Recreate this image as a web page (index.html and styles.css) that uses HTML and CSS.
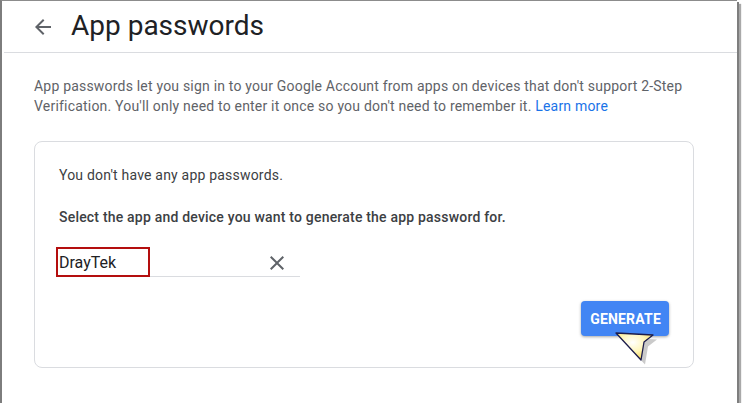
FILE: index.html
```html
<!DOCTYPE html>
<html lang="en">
<head>
<meta charset="utf-8">
<title>App passwords</title>
<link rel="stylesheet" href="styles.css">
</head>
<body>
<div class="frame">
  <header class="top">
    <button class="back" aria-label="Back">
      <svg viewBox="0 0 24 24" width="24" height="24"><path d="M20 11H7.83l5.59-5.59L12 4l-8 8 8 8 1.41-1.41L7.83 13H20v-2z" fill="#5f6368"/></svg>
    </button>
    <h1 class="title">App passwords</h1>
  </header>
  <main class="content">
    <p class="intro">App passwords let you sign in to your Google Account from apps on devices that don't support 2-Step Verification. You'll only need to enter it once so you don't need to remember it. <a href="#" class="link">Learn more</a></p>
    <section class="card">
      <p class="none">You don't have any app passwords.</p>
      <p class="select">Select the app and device you want to generate the app password for.</p>
      <div class="field">
        <span class="value">DrayTek</span>
        <svg class="clear" viewBox="0 0 24 24" width="24" height="24"><path d="M19 6.41L17.59 5 12 10.59 6.41 5 5 6.41 10.59 12 5 17.59 6.41 19 12 13.41 17.59 19 19 17.59 13.41 12z" fill="#5f6368"/></svg>
        <span class="mark"></span>
      </div>
      <div class="actions">
        <button class="gen">GENERATE</button>
        <svg class="cursor" viewBox="0 0 44 34" width="44" height="34">
          <defs>
            <radialGradient id="g" cx="0.45" cy="0.35" r="0.7">
              <stop offset="0" stop-color="#ffffff"/>
              <stop offset="0.5" stop-color="#fff6b8"/>
              <stop offset="1" stop-color="#f2d04a"/>
            </radialGradient>
          </defs>
          <path d="M4 5 L41 7 L32 14 L29 32 Z" fill="#8a8a8a" opacity="0.45" transform="translate(2,1.5)"/>
          <path d="M2 2 L39 4 L30 11 L27 29 Z" fill="url(#g)" stroke="#1c1c4c" stroke-width="1.3" stroke-linejoin="round"/>
        </svg>
      </div>
    </section>
  </main>
</div>
</body>
</html>
```
FILE: styles.css
```css
html, body {
  margin: 0;
  padding: 0;
  background: #ffffff;
}
body {
  font-family: Roboto, "Liberation Sans", Arial, sans-serif;
  color: #3c4043;
}
.frame {
  box-sizing: border-box;
  width: 737px;
  height: 403px;
  border-top: 1px solid #8c8c8c;
  border-left: 2px solid #7d7d7d;
  background: #fff;
  box-shadow: 2px 2px 0 #7e7e7e, 4px 4px 1px #a9a9a9;
  overflow: hidden;
}
.top {
  display: flex;
  align-items: center;
  height: 51px;
  margin-left: 2px;
  border-bottom: 1px solid #dadce0;
}
.back {
  display: flex;
  align-items: center;
  justify-content: center;
  width: 24px;
  height: 24px;
  padding: 0;
  margin: 0 0 0 27px;
  border: 0;
  background: none;
}
.title {
  margin: 0 0 2px 16px;
  font-family: Roboto, "Open Sans", sans-serif;
  font-weight: 400;
  font-size: 28px;
  line-height: 36px;
  color: #202124;
}
.content {
  padding: 0 43px 0 32px;
}
.intro {
  margin: 23px 0 0;
  font-size: 14px;
  line-height: 20px;
  color: #5f6368;
  letter-spacing: 0.2px;
}
.link {
  color: #1a73e8;
  text-decoration: none;
}
.card {
  margin-top: 25px;
  height: 227px;
  box-sizing: border-box;
  border: 1px solid #dadce0;
  border-radius: 8px;
  padding: 23px 24px 0 24px;
}
.none {
  margin: 0;
  font-size: 14px;
  line-height: 20px;
  color: #3c4043;
  letter-spacing: 0.2px;
}
.select {
  margin: 22px 0 0;
  font-size: 14px;
  line-height: 20px;
  font-weight: 500;
  color: #3c4043;
  letter-spacing: 0.2px;
}
.field {
  position: relative;
  display: flex;
  align-items: center;
  justify-content: space-between;
  width: 244px;
  height: 30px;
  margin: 20px 0 0 -3px;
  border-bottom: 1px solid #dadce0;
  box-sizing: border-box;
}
.value {
  padding-left: 3px;
  padding-top: 2px;
  font-size: 16px;
  color: #202124;
}
.clear {
  margin-right: 11px;
  margin-top: 2px;
}
.mark {
  position: absolute;
  left: 0;
  top: 0;
  width: 94px;
  height: 30px;
  box-sizing: border-box;
  border: 2px solid #b40e0e;
}
.actions {
  position: relative;
  display: flex;
  justify-content: flex-end;
  margin-top: 24px;
}
.gen {
  height: 35px;
  padding: 0 8px 0 9px;
  border: 0;
  border-radius: 4px;
  background: #4285f4;
  color: #fff;
  font-family: Roboto, "Liberation Sans", sans-serif;
  font-weight: 700;
  font-size: 14px;
  letter-spacing: 0.2px;
  box-shadow: 0 1px 3px rgba(0,0,0,0.35);
}
.cursor {
  position: absolute;
  right: 11px;
  top: 30px;
}
```
